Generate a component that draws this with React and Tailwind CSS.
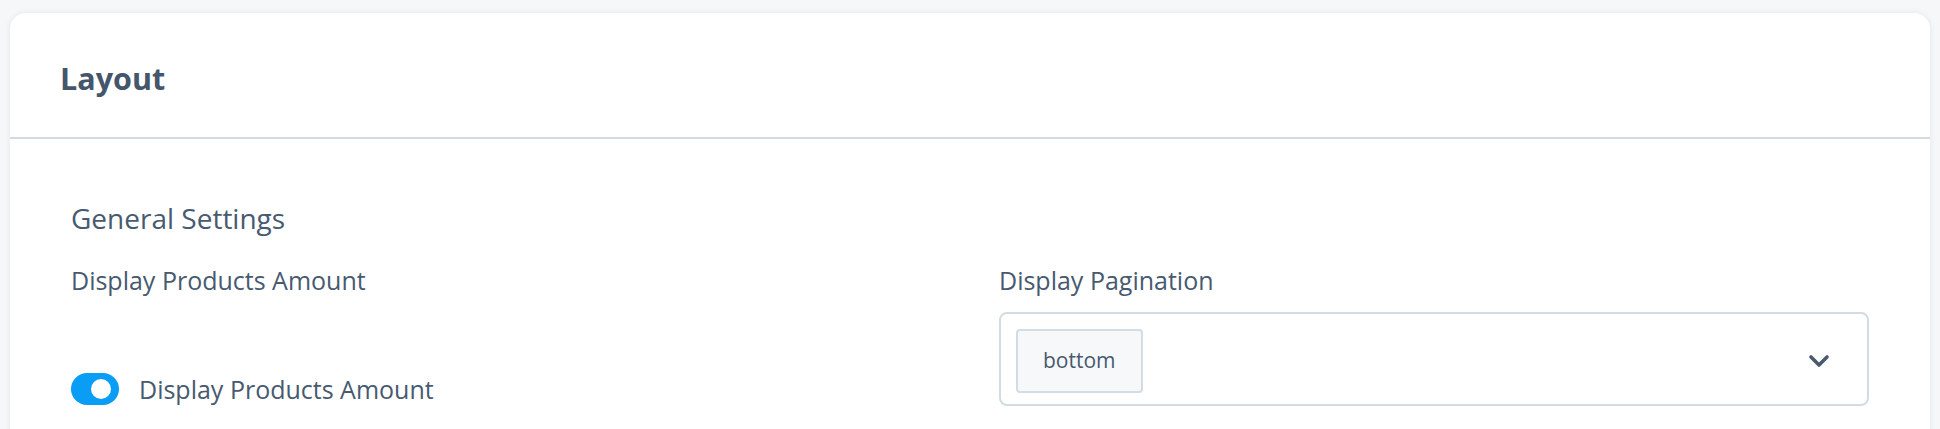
import React from 'react';

const Toggle = () => (
  <div className="w-[48px] h-[32px] rounded-full bg-[#0a9df6] flex items-center justify-end pr-[8px]">
    <div className="w-[20px] h-[20px] rounded-full bg-white" />
  </div>
);

const Chevron = () => (
  <svg width="22" height="14" viewBox="0 0 22 14" fill="none">
    <polyline points="3,3 11,11 19,3" stroke="#4a5b6f" strokeWidth="3.6" strokeLinecap="round" strokeLinejoin="round" />
  </svg>
);

export default function App() {
  return (
    <div className="min-h-screen bg-[#f6f7f9] pt-[13px] px-[10px] font-['Open_Sans',sans-serif] text-[#475a6f]">
      <div className="bg-white rounded-[16px] shadow-[0_0_6px_rgba(30,40,60,0.08)]">
        {/* header */}
        <div className="h-[126px] flex items-center px-[50px] pt-[6px] border-b-2 border-[#d4dae1]">
          <h2 className="text-[30.5px] leading-[38px] font-bold text-[#44566c]">Layout</h2>
        </div>

        <div className="px-[61px] pt-[62px] pb-[80px]">
          <h3 className="text-[28px] leading-[34px]">General Settings</h3>

          <div className="grid grid-cols-2 gap-x-[58px] mt-[30px]">
            <div>
              <label className="block text-[25px] leading-[30px]">Display Products Amount</label>
              <div className="flex items-center gap-[20px] mt-[78px]">
                <Toggle />
                <span className="text-[25px] leading-[30px]">Display Products Amount</span>
              </div>
            </div>

            <div>
              <label className="block text-[25px] leading-[30px]">Display Pagination</label>
              <div className="mt-[17px] h-[94px] border-2 border-[#d3dbe3] rounded-[8px] flex items-center justify-between pl-[15px] pr-[37px]">
                <div className="h-[64px] mt-[4px] px-[25px] flex items-center border-2 border-[#d3dbe3] rounded-[4px] bg-[#f6f8fa] text-[21px]">
                  bottom
                </div>
                <div className="mt-[4px]">
                  <Chevron />
                </div>
              </div>
            </div>
          </div>
        </div>
      </div>
    </div>
  );
}
